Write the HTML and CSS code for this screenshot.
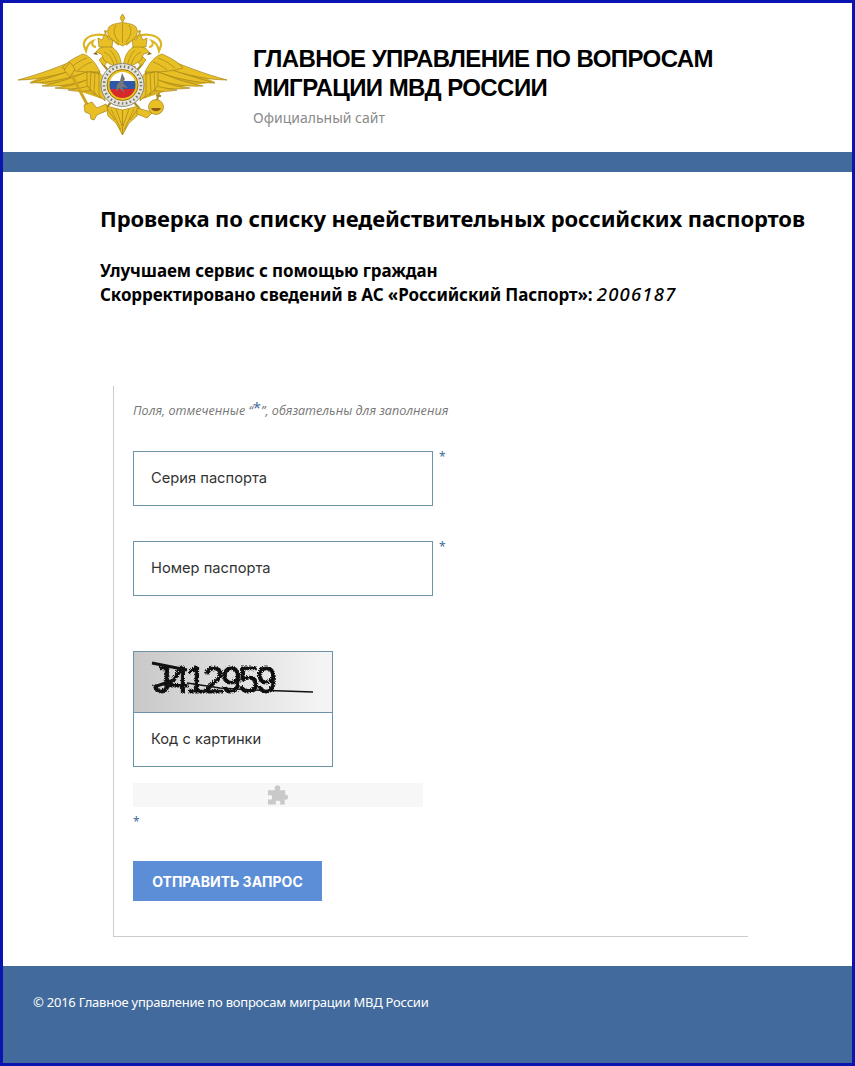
FILE: index.html

```html
<!DOCTYPE html>
<html lang="ru">
<head>
  <meta charset="UTF-8" />
  <meta name="viewport" content="width=device-width, initial-scale=1.0"/>
  <title>Проверка по списку недействительных российских паспортов</title>
  <link rel="stylesheet" href="styles.css">
</head>
<body>
  <div class="page">
    <header class="header">
      <svg class="emblem" viewBox="3 3 240 149" aria-hidden="true">
        <defs>
          <g id="half">
            <!-- wing: base, then long feathers, bottom ones first -->
            <path class="fill" d="M30 82L84 58L100 72L105 100L70 88Z"/>
            <path class="gold" d="M68 90C78 89 88 86 96 81L98 88C88 92 78 92 68 90Z"/>
            <path class="gold" d="M55 88C68 87 82 83 94 76L96 83C84 89 70 90 55 88Z"/>
            <path class="gold" d="M42 86C58 83 76 77 92 69L94 77C78 84 60 87 42 86Z"/>
            <path class="gold" d="M30 83C50 78 70 71 90 63L92 70C72 78 50 83 30 83Z"/>
            <path class="gold" d="M18 80C40 74 62 66 84 56L90 64C70 72 42 80 18 80Z"/>
            <!-- shoulder feathers -->
            <path class="gold" d="M62 68C68 61 76 57 83 54C90 56 96 63 100 72L92 72C82 72 72 71 62 68Z"/>
            <path class="line" d="M70 68C76 63 81 60 87 58M78 70C83 66 88 63 92 62"/>
            <!-- inner fan -->
            <path class="gold" d="M87 72L93 72L91 91L87 85Z"/>
            <path class="gold" d="M91 72L97 74L95 95L90 89Z"/>
            <path class="gold" d="M95 72L101 76L100 98L94 92Z"/>
            <path class="gold" d="M99 72L104 78L105 101L99 95Z"/>

            <!-- crossed rod with hilt -->
            <path class="rod" d="M102 63L142 112"/>
            <path class="gold" d="M99 60L103 56L108 61L104 66Z"/>

            <!-- neck and head -->
            <path class="gold" d="M120 72C118 67 110 65 104 60C102 57 103 55 101 54L96 52C99 47 106 45 112 47C118 51 121 58 121.500 66L122 72Z"/>
            <path class="line" d="M104 52C109 54 112 58 114 65M110 50C114 54 117 60 118 68"/>
            <path class="gold" d="M110 66L120 72L118 76L108 72Z"/>
            <path class="dark" d="M96 52L93 54L98 55Z"/>

            <!-- small crown and ribbon -->
            <path class="curl" d="M119 45C113 38 104 33 95 35C87 36 83 41 84 46L86 51C87 47 88 43 93 41C91 44 93 47 96 47"/>
            <path class="gold" d="M99 47L98 38L102 40L105.500 33L109 40L113 38L112 47Z"/>
            <circle cx="105.500" cy="31.500" r="1.500" fill="#c9a122"/>

            <!-- leg and tail -->
            <path class="gold" d="M122.500 135L116 123L108 116L106 106L122.500 110Z"/>
            <path class="line" d="M111 109L121 130M116 109L122 126M108 110L115 120"/>
          </g>
        </defs>
        <use href="#half"/>
        <use href="#half" transform="matrix(-1 0 0 1 245 0)"/>

        <!-- big crown -->
        <path class="gold" d="M122.500 14L125 18L122.500 22L120 18Z"/>
        <path class="gold" d="M122.500 46L114 41C108 37 106 32 109 27C113 23 118 24 122.500 22C127 24 132 23 136 27C139 32 137 37 131 41Z"/>
        <path class="line" d="M116 25C112 31 115 37 119 42M129 25C133 31 130 37 126 42M122.500 23L122.500 43"/>

        <!-- sceptre and talon -->
        <path class="rod rod-wide" d="M70 72L89 108"/>
        <path class="gold" d="M70 62L75 69L70 77L64 70Z"/>
        <path class="gold" d="M84 105L92 102L97 108L106 104L108 110L97 115L94 120L91 119L90 114L85 112Z"/>

        <!-- orb and talon -->
        <path class="gold" d="M137 108L148 111L152 113L147 118L137 114Z"/>
        <circle class="gold" cx="156" cy="107" r="7.500"/>
        <path d="M151 108A5.500 5.500 0 0 0 161 108Z" fill="#8e5a18"/>
        <path class="rod" d="M157 100L159 93M156 95.500L161 96"/>

        <!-- medallion -->
        <circle cx="122.500" cy="85" r="21.500" fill="#e4e3dc" stroke="#8b8b7c"/>
        <circle cx="122.500" cy="85" r="18.500" fill="none" stroke="#77776a" stroke-width="2.500" stroke-dasharray="1.500 2.500"/>
        <circle cx="122.500" cy="85" r="15.500" fill="#e8bf20" stroke="#9a7a12"/>
        <clipPath id="shield"><circle cx="122.500" cy="85" r="13"/></clipPath>
        <g clip-path="url(#shield)">
          <rect x="109" y="72" width="27" height="9" fill="#fff"/>
          <rect x="109" y="81" width="27" height="8" fill="#2d57a8"/>
          <rect x="109" y="89" width="27" height="9" fill="#d62a2a"/>
          <path d="M122 73L125 79L123 83L128 88L122 87L125 93L119 88L116 92L117 85L120 81Z" fill="#77777c"/>
        </g>
      </svg>
      <div class="brand">
        <div class="brand-title">ГЛАВНОЕ УПРАВЛЕНИЕ ПО ВОПРОСАМ<br>МИГРАЦИИ МВД РОССИИ</div>
        <div class="brand-sub">Официальный сайт</div>
      </div>
    </header>
    <div class="strip"></div>

    <main class="content">
      <h1>Проверка по списку недействительных российских паспортов</h1>
      <p class="lead">Улучшаем сервис с помощью граждан<br>Скорректировано сведений в АС «Российский Паспорт»: <em>2006187</em></p>

      <form class="form-box">
        <p class="note">Поля, отмеченные “<span class="req req-note">*</span>”, обязательны для заполнения</p>

        <div class="row">
          <input type="text" class="field" placeholder="Серия паспорта">
          <span class="req">*</span>
        </div>
        <div class="row">
          <input type="text" class="field" placeholder="Номер паспорта">
          <span class="req">*</span>
        </div>

        <div class="captcha">
          <svg class="captcha-img" viewBox="0 0 198 60" aria-hidden="true">
            <filter id="rough"><feTurbulence baseFrequency="0.6" numOctaves="2" seed="3"/><feDisplacementMap in="SourceGraphic" scale="3"/></filter>
            <g filter="url(#rough)">
              <text x="18" y="40" class="captcha-text" textLength="124" lengthAdjust="spacing">J412959</text>
            </g>
            <path d="M53 31L86 36L119 38L179 40" fill="none" stroke="#111" stroke-width="1.500"/>
            <path d="M18 11L53 18M20 35L40 28" fill="none" stroke="#111" stroke-width="3"/>
          </svg>
          <input type="text" class="captcha-field" placeholder="Код с картинки">
        </div>

        <div class="puzzle">
          <svg viewBox="1 2 23 22" width="22" height="22" aria-hidden="true">
            <path d="M9 5.500C9 2 15 2 15 5.500C15 6.500 14.500 7 14.500 8H20V13C21 12.500 21.500 12.500 22 13C24 14.500 23 18 20.500 18C20 18 20 17.500 19.500 17.500V23H14.500C14.500 22 15 21.500 15 20.500C15 18.500 10 18.500 10 20.500C10 21.500 10.500 22 10.500 23H2V17.500C3 17.500 3.500 18 4.500 18C7 18 7 13 4.500 13C3.500 13 3 13.500 2 13.500V8H9.500C9.500 7 9 6.500 9 5.500Z" fill="#c9c9c9"/>
          </svg>
        </div>
        <div class="req req-alone">*</div>

        <button type="button" class="submit">ОТПРАВИТЬ ЗАПРОС</button>
      </form>
    </main>

    <footer class="footer">© 2016 Главное управление по вопросам миграции МВД России</footer>
  </div>
</body>
</html>
```

FILE: styles.css

```css
* {
  box-sizing: border-box;
}
body {
  margin: 0;
  background: #fff;
  color: #000;
  font-family: "Noto Sans", Arial, sans-serif;
}
.page {
  display: flex;
  flex-direction: column;
  height: 1066px;
  border: 3px solid #0a14b0;
}
.header {
  display: flex;
  align-items: flex-start;
  height: 149px;
  flex: none;
}
.emblem {
  width: 240px;
  height: 149px;
  flex: none;
}
.fill {
  fill: #d9b021;
}
.gold {
  fill: #e8c026;
  stroke: #a58418;
  stroke-width: 0.7;
}
.line {
  fill: none;
  stroke: #a58418;
  stroke-width: 0.7;
}
.curl {
  fill: none;
  stroke: #dcb522;
  stroke-width: 2.2;
}
.dark {
  fill: #7a6212;
}
.rod {
  fill: none;
  stroke: #a98a1c;
  stroke-width: 2;
}
.rod-wide {
  stroke: #cfa61f;
  stroke-width: 3;
}
.brand {
  margin-left: 10px;
  padding-top: 41px;
}
.brand-title {
  font-family: "Liberation Sans", Arial, sans-serif;
  font-size: 24px;
  font-weight: 700;
  line-height: 29px;
  letter-spacing: -0.57px;
}
.brand-sub {
  margin-top: 6px;
  font-size: 14px;
  line-height: 20px;
  color: #8a8a8a;
}
.strip {
  height: 20px;
  flex: none;
  background: #426a9c;
}
.content {
  flex: 1;
  padding: 31px 0 0 97px;
}
h1 {
  margin: 0;
  font-size: 22px;
  line-height: 30px;
  font-weight: 700;
  letter-spacing: -0.13px;
}
.lead {
  margin: 26px 0 0;
  font-size: 17px;
  line-height: 23px;
  font-weight: 700;
  letter-spacing: -0.1px;
}
.lead em {
  font-size: 18.5px;
  font-weight: 500;
  font-style: italic;
  letter-spacing: 1.2px;
}
.form-box {
  width: 635px;
  height: 551px;
  margin: 80px 0 0 13px;
  padding: 15px 0 0 19px;
  border-left: 1px solid #ccc;
  border-bottom: 1px solid #ccc;
}
.note {
  margin: 0 0 30px;
  font-family: "Open Sans", sans-serif;
  font-size: 12.6px;
  line-height: 20px;
  font-style: italic;
  color: #777;
}
.req {
  color: #426a9c;
  font-size: 12px;
  line-height: 12px;
  font-style: normal;
}
.req-note {
  position: relative;
  top: -2px;
  font-size: 15px;
}
.row {
  display: flex;
  align-items: flex-start;
  gap: 6px;
  margin-bottom: 35px;
}
.field,
.captcha-field {
  display: block;
  padding: 0 17px 2px;
  border: 1px solid #6d93ab;
  border-radius: 0;
  background: #fff;
  font-family: Inter, sans-serif;
  font-size: 14.7px;
  outline: none;
}
.field {
  width: 300px;
  height: 55px;
}
.field::placeholder,
.captcha-field::placeholder {
  color: #333;
  opacity: 1;
}
.captcha {
  width: 200px;
  height: 116px;
  margin-top: 55px;
  border: 1px solid #6d93ab;
}
.captcha-img {
  display: block;
  width: 198px;
  height: 60px;
  background: linear-gradient(90deg, #c8c8c8, #f4f4f4 95%);
}
.captcha-text {
  font-family: "Liberation Sans", sans-serif;
  font-size: 37px;
  fill: #111;
  stroke: #111;
  stroke-width: 1;
}
.captcha-field {
  width: 198px;
  height: 54px;
  border: 0;
  border-top: 1px solid #6d93ab;
}
.puzzle {
  display: flex;
  justify-content: center;
  align-items: center;
  width: 290px;
  height: 24px;
  margin-top: 16px;
  background: #f7f7f7;
}
.req-alone {
  margin-top: 9px;
}
.submit {
  display: block;
  width: 189px;
  height: 40px;
  margin-top: 33px;
  border: 0;
  background: #5b8ed6;
  color: #fff;
  font-family: Inter, sans-serif;
  font-size: 14px;
  font-weight: 700;
  cursor: pointer;
}
.footer {
  height: 97px;
  flex: none;
  padding: 26px 30px 0;
  background: #426a9c;
  color: #fff;
  font-size: 13px;
  line-height: 20px;
  letter-spacing: -0.23px;
}
```
